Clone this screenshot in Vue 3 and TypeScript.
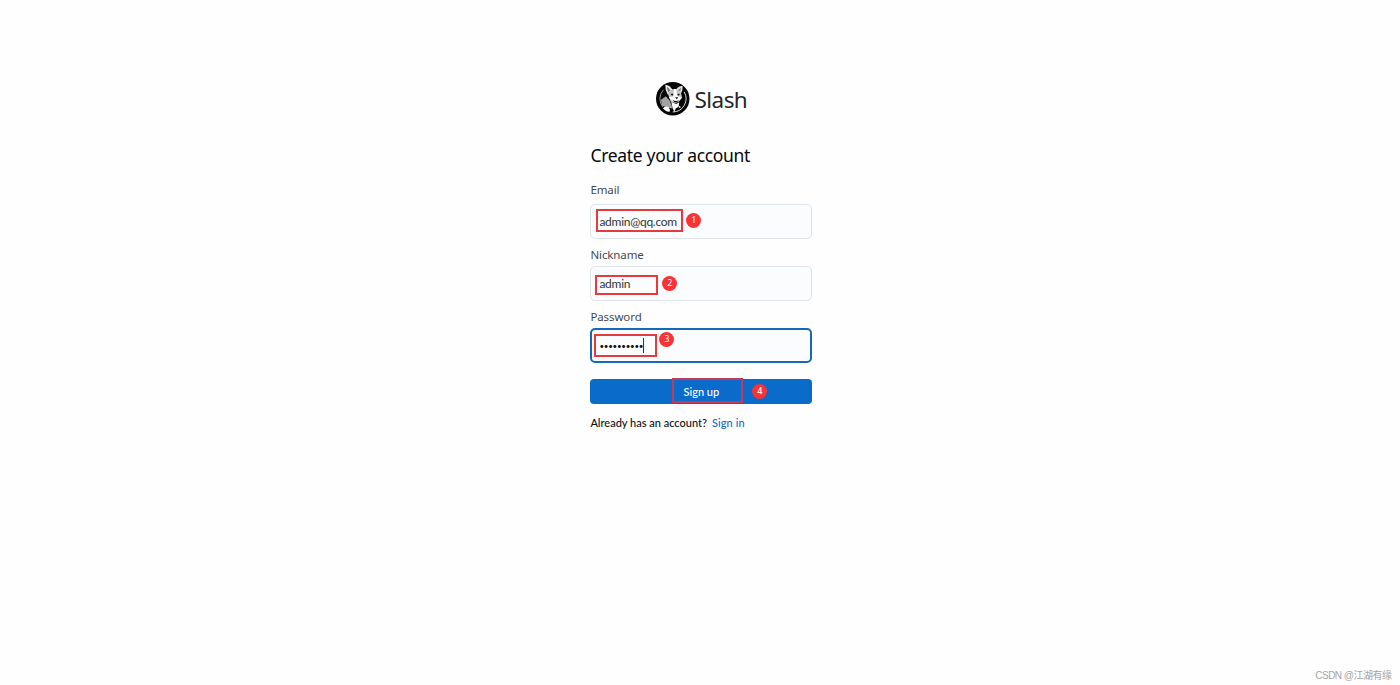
<script setup lang="ts">
import { ref } from "vue";

interface Field {
	name: string;
	label: string;
	value: string;
	step: number;
	focused?: boolean;
}

const fields = ref<Field[]>([
	{ name: "email", label: "Email", value: "admin@qq.com", step: 1 },
	{ name: "nickname", label: "Nickname", value: "admin", step: 2 },
	{ name: "password", label: "Password", value: "••••••••••", step: 3, focused: true },
]);
</script>

<template>
	<main class="page">
		<div class="brand">
			<svg class="logo" viewBox="0 0 34 34">
				<circle cx="17" cy="17" r="17" fill="#050505" />
				<!-- inner ring, open behind the ears -->
				<path d="M7.5 8 A13.3 13.3 0 0 0 7 25.5" fill="none" stroke="#aaa" stroke-width="0.9" />
				<path d="M28.5 10 A13.4 13.4 0 0 1 17 30.4" fill="none" stroke="#ddd" stroke-width="1" />
				<!-- shoulder and paw -->
				<path d="M5 18 L10 14.5 L14 19 L17 27 L12 26 L6 24Z" fill="#a3a3a3" />
				<path d="M7 27 Q9 23.5 13 25.5 Q15 28 13.5 30.5 Q9.5 30 7 27Z" fill="#fff" />
				<!-- ears -->
				<path d="M9.5 2.8 Q14 3.5 17 8 L12 13 Q9 8 9.5 2.8Z" fill="#e6e6e6" />
				<path d="M11 5 Q13.5 6 14.5 8.5 L12.3 10.5Z" fill="#777" />
				<path d="M20.5 7.5 Q23 3.5 27 4 Q27.5 8.5 25 12.5Z" fill="#e6e6e6" />
				<path d="M22.5 8 L25.5 5.5 L24.5 10Z" fill="#777" />
				<!-- face -->
				<path d="M12 12 Q14 7 19 7 Q24 7 25.5 12 L26.5 16 Q24 20 20.5 21.5 L15 20Z" fill="#c4c4c4" />
				<path d="M18.3 7 L20.5 7 L21.5 14 L26 16 Q23.5 20 20.5 20.5 Q15 19 13 15.5 L17.5 14.5Z" fill="#fff" />
				<path d="M15 12 L17.5 11.8 L17.3 13.7 L15.5 13.5Z M22 11.8 L24 12.3 L23.6 13.7 L22 13.5Z" fill="#080808" />
				<path d="M19.3 15.5 L22.6 15.5 L21.2 17.4Z M17 18 Q20 20.5 23.5 18.3 L21 20.8 L18.5 20.3Z" fill="#080808" />
				<!-- chest -->
				<path d="M15.5 20 L20.5 22.3 L23.5 20.5 L23 25 L20 27 L18.5 30.5 L16.5 25Z" fill="#f5f5f5" />
				<circle cx="24" cy="25.3" r="0.9" fill="#eee" />
			</svg>
			<span class="brand-name">Slash</span>
		</div>

		<form class="form" @submit.prevent>
			<h1 class="title">Create your account</h1>
			<div v-for="field in fields" :key="field.name" class="field" :class="field.name">
				<label class="label">{{ field.label }}</label>
				<div class="input" :class="{ focused: field.focused }">
					<span class="value">{{ field.value }}</span>
					<span v-if="field.focused" class="caret"></span>
					<span class="mark"></span>
					<span class="badge">{{ field.step }}</span>
				</div>
			</div>
			<button class="submit" type="submit">
				<span class="submit-text">Sign up</span>
				<span class="mark"></span>
				<span class="badge">4</span>
			</button>
			<p class="footer">
				<span class="question">Already has an account?</span>
				<a class="link">Sign in</a>
			</p>
		</form>

		<div class="watermark">CSDN @江湖有缘</div>
	</main>
</template>

<style>
body {
	background: #fefefe;
}
</style>

<style scoped>
.page {
	position: relative;
	box-sizing: border-box;
	height: 685px;
	padding-top: 82px;
	overflow: hidden;
	font-family: "Noto Sans", "Open Sans", sans-serif;
	white-space: nowrap;
}

.brand {
	display: flex;
	align-items: center;
	width: 222px;
	height: 34px;
	margin-left: 590px;
	padding-left: 66px;
	box-sizing: border-box;
}

.logo {
	width: 33.5px;
	height: 33.5px;
	flex: none;
}

.brand-name {
	margin: 1px 0 0 5px;
	font-size: 22.5px;
	line-height: 34px;
	letter-spacing: -0.55px;
	color: #262626;
}

.form {
	display: flex;
	flex-direction: column;
	width: 222px;
	margin-left: 590.4px;
	padding-top: 27px;
}

.title {
	margin: 0 0 1px;
	font-size: 17.5px;
	font-weight: 400;
	line-height: 24px;
	letter-spacing: -0.31px;
	color: #080808;
}

.field {
	display: flex;
	flex-direction: column;
	height: 62px;
}

.field.email {
	height: 65px;
	padding-top: 10px;
}

.label {
	flex: none;
	height: 23px;
	font-size: 11.5px;
	line-height: 23px;
	letter-spacing: -0.1px;
	color: #454b50;
}

.email .label {
	height: 26px;
}

.input {
	position: relative;
	display: flex;
	flex: none;
	align-items: center;
	box-sizing: border-box;
	height: 35px;
	padding-left: 8px;
	border: 1px solid #dfe4e9;
	border-radius: 5px;
	background: #fbfcfe;
	font-family: Lato, sans-serif;
	font-size: 12px;
	letter-spacing: -0.27px;
	color: #30363b;
}

.input.focused {
	padding-left: 7px;
	border: 2px solid #1769b8;
}

.password .value {
	font-size: 8px;
	letter-spacing: -0.26px;
	color: #111;
}

.caret {
	width: 1px;
	height: 15px;
	background: #333;
}

.mark {
	position: absolute;
	box-sizing: border-box;
	border: 2px solid #e53b40;
}

.badge {
	position: absolute;
	width: 15px;
	height: 15px;
	border-radius: 50%;
	background: #f93237;
	font-family: "Noto Sans", sans-serif;
	font-size: 9px;
	line-height: 14px;
	letter-spacing: 0;
	text-align: center;
	color: #fff;
}

.email .mark {
	left: 5px;
	top: 4px;
	width: 87px;
	height: 23px;
}

.email .badge {
	left: 95px;
	top: 8px;
}

.nickname .mark {
	left: 4px;
	top: 8px;
	width: 63px;
	height: 20px;
}

.nickname .badge {
	left: 71px;
	top: 9px;
}

.password .mark {
	left: 2px;
	top: 4px;
	width: 63px;
	height: 23px;
}

.password .badge {
	left: 67px;
	top: 2px;
}

.submit {
	position: relative;
	height: 25px;
	margin: 12px 0 0;
	padding: 0;
	border: 0;
	border-radius: 4px;
	background: #0b6bcb;
	font-family: Lato, sans-serif;
	font-size: 11px;
	font-weight: 500;
	line-height: 26px;
	color: #fff;
}

.submit .mark {
	left: 82px;
	top: -1px;
	width: 71px;
	height: 25px;
	border-color: #c33b56;
}

.submit .badge {
	left: 162px;
	top: 5px;
}

.footer {
	display: flex;
	gap: 5px;
	margin: 9px 0 0;
	font-family: Lato, sans-serif;
	font-size: 11px;
	font-weight: 500;
	line-height: 20px;
	color: #111;
}

.link {
	letter-spacing: 0.1px;
	color: #1769c4;
}

.watermark {
	position: absolute;
	right: 8.5px;
	bottom: 1px;
	font-family: "Liberation Sans", "Noto Sans CJK SC", sans-serif;
	font-size: 10px;
	line-height: 16px;
	letter-spacing: -0.5px;
	color: #a5a5a5;
}
</style>
